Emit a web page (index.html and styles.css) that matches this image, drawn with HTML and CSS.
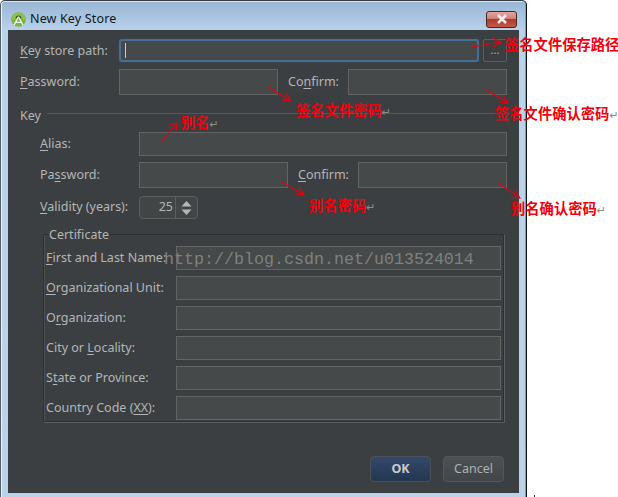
FILE: index.html
```html
<!DOCTYPE html>
<html lang="en">
<head>
<meta charset="utf-8">
<title>New Key Store</title>
<link rel="stylesheet" href="styles.css">
</head>
<body>
<div class="window">
  <header class="titlebar">
    <svg class="logo" width="15" height="15" viewBox="0 0 16 16">
      <circle cx="8" cy="8" r="7.8" fill="#7fb23a"/>
      <path d="M.5 8a7.500 7.500 0 0 1 15 0z" fill="#8cc152"/>
      <path d="M4.800 7a3.200 3.200 0 0 1 6.400 0z" fill="#3f5a2a"/>
      <path d="M8 5L3.200 14M8 5l4.800 9M5 11h6" stroke="#f4f6f0" stroke-width="1.300" fill="none"/>
    </svg>
    <span class="title">New Key Store</span>
    <div class="close"><svg width="12" height="10" viewBox="0 0 12 10"><path d="M2 1l8 8M10 1L2 9" stroke="#f2eeee" stroke-width="2.600" fill="none"/></svg></div>
  </header>
  <main class="content">
    <div class="row row-path">
      <label class="label w-top first"><u>K</u>ey store path:</label>
      <div class="field focus"><i class="caret"></i></div>
      <div class="browse">...</div>
    </div>
    <div class="row row-pass">
      <label class="label w-top"><u>P</u>assword:</label>
      <div class="field half"></div>
      <label class="label confirm">Co<u>n</u>firm:</label>
      <div class="field half"></div>
    </div>
    <div class="key-head"><span>Key</span><hr class="rule"></div>
    <section class="key">
      <div class="row row-alias">
        <label class="label w-key"><u>A</u>lias:</label>
        <div class="field"></div>
      </div>
      <div class="row row-pass2">
        <label class="label w-key">Pa<u>s</u>sword:</label>
        <div class="field half key-half"></div>
        <label class="label confirm"><u>C</u>onfirm:</label>
        <div class="field half key-half"></div>
      </div>
      <div class="row row-valid">
        <label class="label w-key"><u>V</u>alidity (years):</label>
        <div class="spinner">
          <span class="num">25</span>
          <div class="arrows">
            <svg width="11" height="16" viewBox="0 0 11 16"><path d="M5.500 1L10.500 6.500H.5zM.5 9.500H10.500L5.500 15z" fill="#b4b6b8"/></svg>
          </div>
        </div>
      </div>
    </section>
    <fieldset class="cert">
      <legend>Certificate</legend>
      <div class="row cert-row"><label class="label w-cert"><u>F</u>irst and Last Name:</label><div class="field"></div></div>
      <div class="row cert-row"><label class="label w-cert"><u>O</u>rganizational Unit:</label><div class="field"></div></div>
      <div class="row cert-row"><label class="label w-cert">O<u>r</u>ganization:</label><div class="field"></div></div>
      <div class="row cert-row"><label class="label w-cert">City or <u>L</u>ocality:</label><div class="field"></div></div>
      <div class="row cert-row"><label class="label w-cert">S<u>t</u>ate or Province:</label><div class="field"></div></div>
      <div class="row cert-row"><label class="label w-cert">Country Code (<u>XX</u>):</label><div class="field"></div></div>
    </fieldset>
    <footer class="buttons">
      <button class="btn ok">OK</button>
      <button class="btn">Cancel</button>
    </footer>
  </main>
</div>

<div class="watermark">http://blog.csdn.net/u013524014</div>

<svg class="arrows-layer" width="618" height="497" viewBox="0 0 618 497">
  <g stroke="#e8000c" stroke-width="1.100" fill="none">
    <path d="M268 87L291 101M282 100L291 101L286 93"/>
    <path d="M472 47L501 42M493 38L501 42L494 47"/>
    <path d="M485 89L508 103M499 102L508 103L503 95"/>
    <path d="M162 141L177 123M169 125L177 123L176 131"/>
    <path d="M282 182L304 195M295 194L304 195L299 187"/>
    <path d="M498 183L520 198M511 197L520 198L515 190"/>
  </g>
  <path d="M534.500 495V497" stroke="#333" fill="none"/>
</svg>

<div class="note n-path">签名文件保存路径</div>
<div class="note n-pass">签名文件密码<span class="ret">↵</span></div>
<div class="note n-confirm">签名文件确认密码<span class="ret">↵</span></div>
<div class="note n-alias">别名<span class="ret">↵</span></div>
<div class="note n-apass">别名密码<span class="ret">↵</span></div>
<div class="note n-aconfirm">别名确认密码<span class="ret">↵</span></div>
</body>
</html>
```
FILE: styles.css
```css
html, body { margin: 0; padding: 0; background: #fff; }
body { width: 618px; height: 497px; overflow: hidden; position: relative; font-family: "Noto Sans", sans-serif; }

.window {
  width: 527px; height: 497px; box-sizing: border-box;
  display: flex; flex-direction: column;
  background: linear-gradient(#98b5d3 0, #b9d3ec 30px, #bbd3ea 100%);
  border-top: 1px solid #3a3d40;
  border-right: 1px solid #0e1418;
  border-left: 1px solid #5a6068;
  border-top-left-radius: 5px; border-top-right-radius: 5px;
  box-shadow: inset -1px 0 0 #38b6e0, inset 1px 0 0 #eef4fa, inset 0 1px 0 #dbe6f1;
}

.titlebar { height: 29px; flex: none; display: flex; align-items: center; padding: 0 9px 0 10px; box-sizing: border-box; }
.logo { flex: none; margin-top: 7px; }
.title { margin-left: 4px; font-size: 12.500px; color: #10161c; margin-top: 6px; letter-spacing: .15px; }
.close {
  margin-left: auto; width: 31px; height: 17px; margin-top: 7px; box-sizing: border-box;
  border: 1px solid #4a2528; border-radius: 3px;
  background: linear-gradient(#e2a79f 0, #cf7f74 45%, #ae3a2c 50%, #c65a48 100%);
  display: flex; align-items: center; justify-content: center;
}

.content {
  flex: 1; margin: 0 7px 4px 7px; padding: 9px 12px 11px 12px;
  background: #3c3f41; display: flex; flex-direction: column; min-height: 0;
}

.row { display: flex; align-items: center; }
.label { flex: none; font-size: 12.500px; color: #b4b6b6; white-space: nowrap; padding-bottom: 2px; }
.first { padding-bottom: 0; }
.label u { text-underline-offset: 2px; text-decoration-thickness: 1px; }
.field { flex: 1; min-width: 0; align-self: stretch; box-sizing: border-box; background: #45494a; border: 1px solid #646464; }
.half { flex: none; width: 159px; }
.key-half { width: 149px; }

.w-top { width: 99px; }
.w-key { width: 99px; }
.w-cert { width: 130px; }

.row-path { height: 23px; }
.focus { border: 2px solid #466d94; border-radius: 3px; display: flex; align-items: center; padding-left: 4px; box-shadow: 0 0 1px #3a5a7c; }
.caret { width: 1px; height: 15px; background: #c8c8c8; }
.browse {
  flex: none; width: 24px; margin-left: 4px; align-self: stretch; box-sizing: border-box;
  border: 1px solid #5c5f60; border-radius: 2px; color: #b4b6b6;
  font-size: 11px; text-align: center; line-height: 20px;
}
.row-pass { height: 26px; margin-top: 7px; }
.confirm { width: 70px; padding-left: 10px; box-sizing: border-box; }

.key-head { display: flex; align-items: center; height: 13px; margin-top: 12px; }
.key-head span { font-size: 12.500px; color: #b4b6b6; flex: none; margin-top: 3px; }
.rule { flex: 1; border: 0; height: 1px; background: #555759; margin: 0 2px 0 6px; }

.key { padding-left: 20px; margin-top: 12px; }
.row-alias { height: 24px; }
.row-pass2 { height: 26px; margin-top: 6px; }
.row-valid { height: 23px; margin-top: 8px; }

.spinner { width: 59px; height: 23px; box-sizing: border-box; border: 1px solid #5c5f60; border-radius: 4px; background: #424546; display: flex; }
.num { width: 36px; box-sizing: border-box; padding-right: 2px; border-right: 1px solid #5c5f60; text-align: right; font-size: 12.500px; line-height: 19px; color: #b4b6b6; }
.arrows { flex: 1; display: flex; align-items: center; justify-content: center; }

.cert {
  margin: 8px 3px 0 23px; padding: 4px 2px 1px 2px; min-width: 0;
  border: 1px solid #2d2f31; box-shadow: 1px 1px 0 #5c5f61, inset 1px 0 0 #4e5153;
  display: flow-root;
}
.cert legend { font-size: 12.500px; color: #b4b6b6; padding: 0 1px; margin-left: 2px; line-height: 15px; }
.cert-row { height: 24px; margin-top: 6px; }
.cert-row:first-of-type { margin-top: 0; }

.buttons { margin-top: auto; display: flex; justify-content: flex-end; gap: 12px; padding-right: 3px; }
.btn {
  width: 61px; height: 26px; box-sizing: border-box; padding: 0 0 2px;
  border: 1px solid #555859; border-radius: 4px;
  background: linear-gradient(#4c5052, #434648);
  color: #a9b3b8; font: 12.500px "Noto Sans", sans-serif;
}
.ok { background: linear-gradient(#34496a, #233751); border-color: #4a5157; color: #c6ccd2; font-weight: 700; }

.watermark {
  position: absolute; left: 164px; top: 250px;
  font: 16.670px/20px "Liberation Mono", monospace; color: #7e8182; white-space: nowrap;
}
.arrows-layer { position: absolute; left: 0; top: 0; pointer-events: none; }

.note {
  position: absolute; white-space: nowrap; color: #f4000c;
  font: 700 14.300px/18px "Noto Sans CJK SC", sans-serif;
}
.ret { color: #8a8c8e; font: 400 11px/18px "DejaVu Sans", sans-serif; }
.n-path { left: 505px; top: 35px; }
.n-pass { left: 296px; top: 101px; }
.n-confirm { left: 495px; top: 104px; }
.n-alias { left: 181px; top: 113px; }
.n-apass { left: 309px; top: 196px; }
.n-aconfirm { left: 511px; top: 199px; }
```
